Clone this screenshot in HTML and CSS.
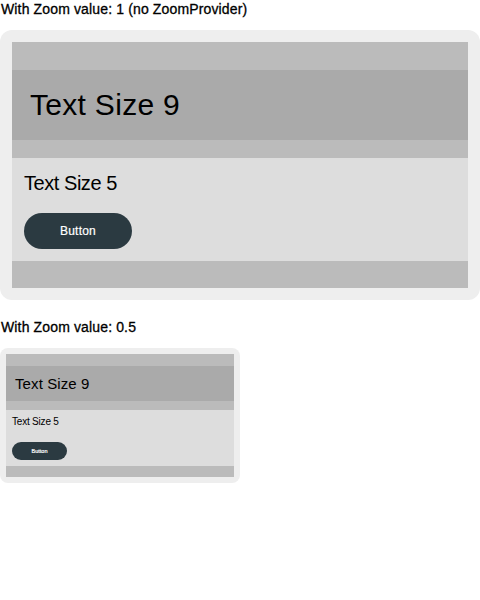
FILE: index.html
```html
<!DOCTYPE html>
<html>
<head>
<meta charset="utf-8">
<link rel="stylesheet" href="styles.css">
</head>
<body>
<div class="title t1">With Zoom value: 1 (no ZoomProvider)</div>
<div class="card big">
  <div class="inner">
    <div class="strip top"></div>
    <div class="header"><span>Text Size 9</span></div>
    <div class="strip mid"></div>
    <div class="content">
      <div class="txt">Text Size 5</div>
      <div class="btn">Button</div>
    </div>
    <div class="strip bot"></div>
  </div>
</div>
<div class="title t2">With Zoom value: 0.5</div>
<div class="card small">
  <div class="inner">
    <div class="strip top"></div>
    <div class="header"><span>Text Size 9</span></div>
    <div class="strip mid"></div>
    <div class="content">
      <div class="txt">Text Size 5</div>
      <div class="btn">Button</div>
    </div>
    <div class="strip bot"></div>
  </div>
</div>
</body>
</html>
```
FILE: styles.css
```css
html, body {
  margin: 0;
  padding: 0;
  background: #ffffff;
  font-family: "Liberation Sans", Arial, sans-serif;
  color: #000000;
}
.title {
  font-size: 14px;
  line-height: 18px;
  font-weight: 400;
  letter-spacing: 0.14px;
  -webkit-text-stroke: 0.3px currentColor;
  height: 18px;
  margin-bottom: 12px;
  padding-left: 1px;
}
.t2 { margin-top: 18px; }
.card {
  background: #eeeeee;
}
.inner {
  display: flex;
  flex-direction: column;
}
.strip { background: #bbbbbb; }
.header {
  background: #aaaaaa;
  display: flex;
  align-items: center;
}
.content {
  background: #dddddd;
  display: flex;
  flex-direction: column;
  align-items: flex-start;
}
.btn {
  background: #2b3a41;
  color: #ffffff;
  display: flex;
  align-items: center;
  justify-content: center;
  -webkit-text-stroke: 0.2px currentColor;
}

/* big */
.big { padding: 12px; border-radius: 12px; }
.big .top { height: 28px; }
.big .header { height: 70px; padding-left: 18px; font-size: 30px; letter-spacing: 0.3px; }
.big .mid { height: 18px; }
.big .content { padding: 14px 12px 12px; height: 77px; }
.big .txt { font-size: 20px; line-height: 22px; letter-spacing: -0.45px; }
.big .btn {
  margin-top: 19px;
  width: 108px;
  height: 36px;
  border-radius: 18px;
  font-size: 12px;
  letter-spacing: 0.2px;
}
.big .bot { height: 27px; }

/* small */
.small { width: 228px; padding: 6px; border-radius: 8px; }
.small .top { height: 12px; }
.small .header { height: 35px; padding-left: 9px; font-size: 15px; letter-spacing: 0.1px; }
.small .mid { height: 9px; }
.small .content { padding: 6px; height: 44px; }
.small .txt { font-size: 10px; line-height: 12px; letter-spacing: -0.2px; }
.small .btn {
  margin-top: 14px;
  width: 55px;
  height: 18px;
  border-radius: 9px;
  font-size: 5.5px;
}
.small .bot { height: 11px; }
```
